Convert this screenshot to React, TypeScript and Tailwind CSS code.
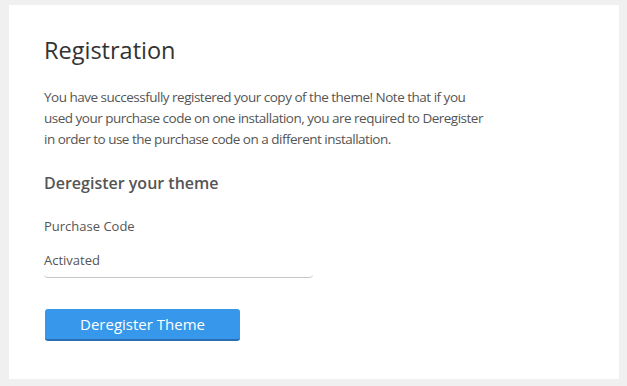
export default function App() {
  return (
    <div
      className="min-h-screen bg-[#f0f0f0] pt-[5px] pl-[9px] pr-[8px] pb-[7px]"
      style={{ fontFamily: '"Open Sans", "Noto Sans", sans-serif' }}
    >
      <div className="bg-white h-[374px] pl-[35px] pr-[30px] pt-[30px]">
        <h1 className="text-[23.5px] leading-[30px] text-[#333] font-normal">Registration</h1>
        <p className="mt-[22px] text-[13.5px] leading-[21px] text-[#555] tracking-[-0.5px]">
          You have successfully registered your copy of the theme! Note that if you
          <br />
          used your purchase code on one installation, you are required to Deregister
          <br />
          in order to use the purchase code on a different installation.
        </p>
        <h2 className="mt-[22px] text-[16px] leading-[22px] font-semibold text-[#555]">Deregister your theme</h2>
        <div className="mt-[23px] text-[13px] leading-[18px] text-[#555]">Purchase Code</div>
        <div className="mt-[16px] w-[269px] border-b border-[#c8c8c8] rounded-b-[4px] pb-[8px] text-[13px] leading-[18px] text-[#555]">
          Activated
        </div>
        <button className="mt-[31px] ml-[1px] block w-[195px] h-[32px] rounded-[3px] bg-[#3797ea] border-b-[2px] border-[#2a6fb6] text-white text-[15px] leading-[30px]">
          Deregister Theme
        </button>
      </div>
    </div>
  );
}
